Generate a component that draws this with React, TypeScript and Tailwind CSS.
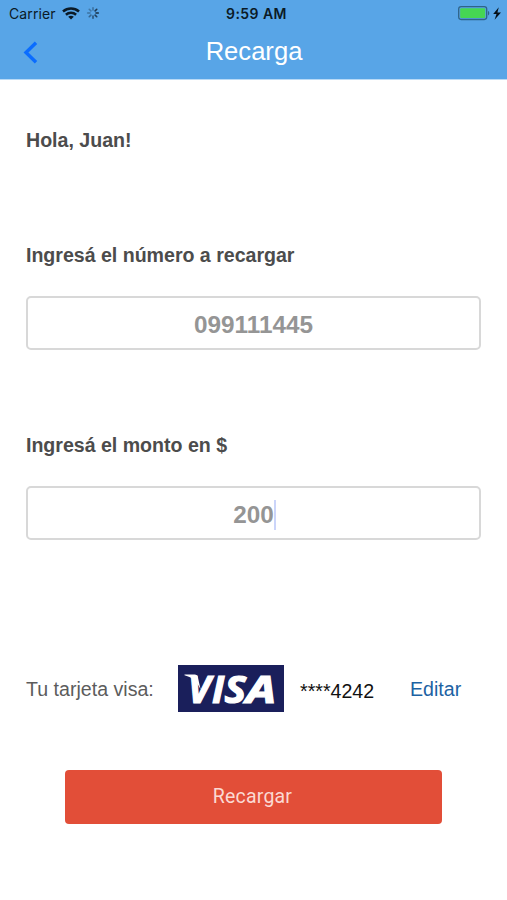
import { useState } from 'react'

interface FieldProps {
  label:    string
  value:    string
  focused?: boolean
  onClick:  () => void
}

const SPINNER_SPOKES = [
  { angle: 0,   opacity: 0.4 },
  { angle: 45,  opacity: 0.85 },
  { angle: 90,  opacity: 0.95 },
  { angle: 135, opacity: 0.8 },
  { angle: 180, opacity: 0.65 },
  { angle: 225, opacity: 0.5 },
  { angle: 270, opacity: 0.4 },
  { angle: 315, opacity: 0.35 },
]

function WifiIcon() {
  return (
    <svg width="18" height="13" viewBox="0 0 18 13" fill="none" stroke="#0b1a26" strokeWidth="2.5" className="block">
      <path d="M1 4.500C5.600.500 12.400.500 17 4.500" />
      <path d="M3.900 7.800c2.900-2.600 7.300-2.600 10.200 0" />
      <path d="M9 12.600 6.200 9.800c1.600-1.400 4-1.400 5.600 0z" fill="#0b1a26" stroke="none" />
    </svg>
  )
}

function Spinner() {
  return (
    <svg width="14" height="14" viewBox="-7 -7 14 14" stroke="#14283a" strokeWidth="1.6" strokeLinecap="round" className="block">
      {SPINNER_SPOKES.map(({ angle, opacity }) => (
        <line key={angle} x1="0" y1="-3" x2="0" y2="-5.3" opacity={opacity} transform={`rotate(${angle})`} />
      ))}
    </svg>
  )
}

function BatteryIcon() {
  return (
    <svg width="44" height="15" viewBox="0 0 44 15" className="block">
      <rect x="0.7" y="0.7" width="28" height="12.8" rx="2.4" fill="none" stroke="#2f6488" strokeWidth="1.3" />
      <rect x="2.2" y="2.2" width="25" height="9.8" rx="1" fill="#46d653" />
      <path d="M30 5v4.400c1.700-.6 1.700-3.800 0-4.400z" fill="#2f6488" />
      <path d="M40.800 1.200 35.200 8h3.300l-1.900 5.700 6.400-7.300h-3.600z" fill="#061019" />
    </svg>
  )
}

function StatusBar() {
  return (
    <div className="grid grid-cols-[1fr_auto_1fr] items-center h-[27px] pl-[9px] pr-[5px] font-['Inter','Liberation_Sans',sans-serif] text-[#0b1a26]">
      <div className="flex items-center">
        <span className="text-[14px] leading-none w-[47px] whitespace-nowrap tracking-[0.1px]">Carrier</span>
        <div className="ml-1.5"><WifiIcon /></div>
        <div className="ml-1.5 -mt-0.5"><Spinner /></div>
      </div>
      <span className="pl-0.5 text-[14px] leading-none font-semibold tracking-[0.45px]">9:59 AM</span>
      <div className="flex justify-end"><BatteryIcon /></div>
    </div>
  )
}

function VisaLogo() {
  return (
    <svg width="106" height="47" viewBox="0 0 106 47" className="block shrink-0 overflow-visible">
      <rect width="106" height="47" fill="#1a1f5b" />
      <path d="M6.500 9.500h10.200c1.700 0 2.700.9 3.100 2.500l2.800 12.500c-3-7.300-8-12.300-16.100-14.300z" fill="#fff" />
      <g
        fill="#fff"
        stroke="#fff"
        strokeWidth="1.2"
        className="font-['Open_Sans','Noto_Sans',sans-serif] font-bold italic text-[38px] leading-none"
      >
        <text x="10 34" y="37.500">VI</text>
        <text x="46.500" y="37.500" textLength="21.500" lengthAdjust="spacingAndGlyphs">S</text>
        <text x="68" y="37.500" textLength="30" lengthAdjust="spacingAndGlyphs">A</text>
      </g>
    </svg>
  )
}

function Field({ label, value, focused, onClick }: FieldProps) {
  return (
    <div>
      <div className="text-[19.600px] leading-6 font-bold text-[#4c4c4c] tracking-[-0.02px]">{label}</div>
      <button
        onClick={onClick}
        className="mt-[29px] w-full h-[54px] flex items-center justify-center pt-1 border-2 border-[#d8d8d8] rounded-[5px] text-[24.300px] font-bold text-[#959595]"
      >
        <span className="pt-px">{value}</span>
        {focused && <span className="w-0.5 h-[30px] -mr-0.5 bg-[#cbd5fa]" />}
      </button>
    </div>
  )
}

export default function App() {
  const [focused, setFocused] = useState<'phone' | 'amount'>('amount')

  return (
    <div className="w-[507px] h-[900px] bg-white overflow-hidden font-['Liberation_Sans',Arial,sans-serif]">
      <header className="h-20 bg-[#58a5e7] border-b border-[#b9daf6]">
        <StatusBar />
        <div className="grid grid-cols-[48px_1fr_48px] items-center h-[49px]">
          <button className="pl-[23px] pt-px" aria-label="Volver">
            <svg width="15" height="23" viewBox="0 0 15 23" fill="none" stroke="#0a6cff" strokeWidth="3.4" className="block">
              <path d="M13 1.800 3 11.500l10 9.700" />
            </svg>
          </button>
          <h1 className="text-center text-[25.600px] leading-7 text-white pb-0.5 pl-px">Recarga</h1>
        </div>
      </header>

      <main className="px-[26px] pt-12">
        <p className="text-[19.600px] leading-6 font-bold text-[#4c4c4c]">Hola, Juan!</p>

        <div className="mt-[91px] flex flex-col gap-[83px]">
          <Field
            label="Ingresá el número a recargar"
            value="099111445"
            focused={focused === 'phone'}
            onClick={() => setFocused('phone')}
          />
          <Field
            label="Ingresá el monto en $"
            value="200"
            focused={focused === 'amount'}
            onClick={() => setFocused('amount')}
          />
        </div>

        {/* Saved card */}
        <div className="mt-[125px] flex items-center text-[19.600px] leading-6 whitespace-nowrap">
          <span className="w-[152px] text-[#5c5c5c]">Tu tarjeta visa:</span>
          <VisaLogo />
          <span className="ml-4 w-[110px] pt-1 text-[#111111]">****4242</span>
          <button className="text-[#1c62a3]">Editar</button>
        </div>

        <button className="mt-[58px] mx-[39px] w-[377px] h-[54px] block pb-px pr-0.5 rounded bg-[#e24e38] font-['Roboto',sans-serif] text-[19.500px] leading-6 tracking-[0.2px] text-[#fbd9d3]">
          Recargar
        </button>
      </main>
    </div>
  )
}
